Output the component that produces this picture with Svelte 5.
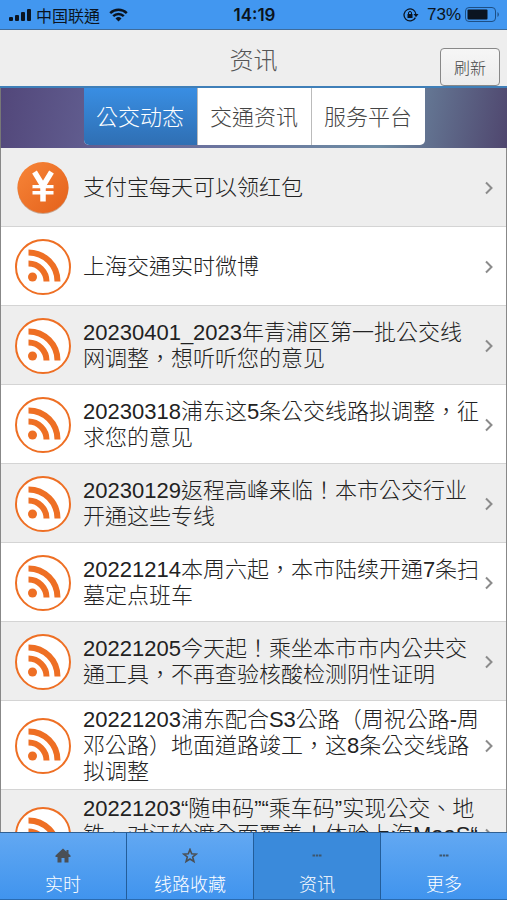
<script>
    const segments = ['公交动态', '交通资讯', '服务平台'];
    const tabs = [
        {label: '实时', icon: 'home'},
        {label: '线路收藏', icon: 'star'},
        {label: '资讯', icon: 'dots'},
        {label: '更多', icon: 'dots'}
    ];
    const news = [
        {icon: 'yuan', text: '支付宝每天可以领红包'},
        {icon: 'rss', text: '上海交通实时微博'},
        {icon: 'rss', text: '20230401_2023年青浦区第一批公交线\n网调整，想听听您的意见'},
        {icon: 'rss', text: '20230318浦东这5条公交线路拟调整，征\n求您的意见'},
        {icon: 'rss', text: '20230129返程高峰来临！本市公交行业\n开通这些专线'},
        {icon: 'rss', text: '20221214本周六起，本市陆续开通7条扫\n墓定点班车'},
        {icon: 'rss', text: '20221205今天起！乘坐本市市内公共交\n通工具，不再查验核酸检测阴性证明'},
        {icon: 'rss', text: '20221203浦东配合S3公路（周祝公路-周\n邓公路）地面道路竣工，这8条公交线路\n拟调整'},
        {icon: 'rss', text: '20221203“随申码”“乘车码”实现公交、地\n铁、对江轮渡全面覆盖！体验上海MaaS“\n绿色出行”'}
    ];
    let segment = $state(0);
    let tab = $state(2);
</script>

<div class="app">
    <div class="status">
        <div class="side">
            <svg width="22" height="14" viewBox="0 0 22 14">
                <rect x="0" y="9" width="4" height="4" rx="1"/>
                <rect x="6" y="7" width="4" height="6" rx="1"/>
                <rect x="12" y="4" width="4" height="9" rx="1"/>
                <rect x="18" y="1" width="4" height="12" rx="1"/>
            </svg>
            <span class="carrier">中国联通</span>
            <svg class="wifi" width="19" height="14" viewBox="0 0 19 14">
                <path d="M1.2 5.2a12 12 0 0 1 16.6 0M4.2 8.2a7.6 7.6 0 0 1 10.6 0" fill="none" stroke="#0b1420" stroke-width="2.5"/>
                <path d="M9.5 13.5 6.5 10.5a4.3 4.3 0 0 1 6 0z"/>
            </svg>
        </div>
        <span class="time">14:19</span>
        <div class="side right">
            <svg width="16" height="14" viewBox="0 0 16 14">
                <path d="M12.4 9.6A6 6 0 1 1 13 6.500" fill="none" stroke="#0b1420" stroke-width="1.3"/>
                <path d="M10.5 6h5L13 9.3z"/>
                <rect x="4.500" y="6" width="5" height="4"/>
                <path d="M5.500 6V5a1.500 1.500 0 0 1 3 0v1" fill="none" stroke="#0b1420"/>
            </svg>
            <span class="percent">73%</span>
            <svg width="35" height="16" viewBox="0 0 35 16">
                <rect x="0.5" y="0.5" width="30" height="14" rx="3.5" fill="none" stroke="#1d4f85"/>
                <rect x="2.5" y="2.5" width="20" height="10" rx="1"/>
                <path d="M32.5 5a3 3 0 0 1 0 5z" fill="#1d4f85"/>
            </svg>
        </div>
    </div>

    <header>
        <h1>资讯</h1>
        <button class="refresh">刷新</button>
    </header>

    <div class="banner">
        <div class="segments">
            {#each segments as name, i}
                <button class:active={segment == i} onclick={() => segment = i}>{name}</button>
            {/each}
        </div>
    </div>

    <ul>
        {#each news as item}
            <li>
                <a href="#news">
                    {#if item.icon == 'yuan'}
                        <svg class="icon" viewBox="0 0 56 56">
                            <defs>
                                <linearGradient id="orange" x1="0" y1="0" x2="1" y2="1">
                                    <stop offset="0" stop-color="#f78538"/>
                                    <stop offset="1" stop-color="#e4611b"/>
                                </linearGradient>
                            </defs>
                            <circle cx="28" cy="28.5" r="25.5" fill="#c9a58e"/>
                            <circle cx="28" cy="27.5" r="25.5" fill="url(#orange)"/>
                            <path d="M19.5 12l8.5 14 8.500-14M28 24v17.500" fill="none" stroke="#fff" stroke-width="5.5"/>
                            <path d="M17.500 25h21v3.500h-21zM17.500 31h21v3.500h-21z" fill="#fff"/>
                            <path d="M17.500 28.500h21v2.500h-21z" fill="#ee7029"/>
                            <path d="M25.250 28h5.500v4h-5.500z" fill="#fff"/>
                        </svg>
                    {:else}
                        <svg class="icon" viewBox="0 0 56 56">
                            <circle cx="28" cy="28" r="27" fill="#fff" stroke="#ee6f24" stroke-width="2"/>
                            <circle cx="17.5" cy="38" r="4.5" fill="#ee6f24"/>
                            <path d="M13.5 24.5a18 18 0 0 1 18 18M13.5 13.5a29 29 0 0 1 29 29" fill="none" stroke="#ee6f24" stroke-width="6"/>
                        </svg>
                    {/if}
                    <span class="text">{item.text}</span>
                    <svg class="arrow" viewBox="0 0 10 14">
                        <path d="M2 1.5 7.5 7 2 12.5" fill="none" stroke="#8b8b8b" stroke-width="2"/>
                    </svg>
                </a>
            </li>
        {/each}
    </ul>

    <nav>
        {#each tabs as item, i}
            <button class:active={tab == i} onclick={() => tab = i}>
                <svg width="16" height="16" viewBox="0 0 16 16">
                    {#if item.icon == 'home'}
                        <path d="M8 0.5 0.5 7.500v1.500h2v5.500h4v-4.500h3v4.500h4V9h2V7.500L13.500 5.600V2h-2v1.800z" fill="#4a4f55"/>
                    {:else if item.icon == 'star'}
                        <path d="M8 1.500l1.700 4.300 4.500.3-3.500 2.900 1.200 4.500L8 11 4.100 13.500l1.200-4.500-3.500-2.900 4.500-.3z" fill="none" stroke="#4a4f55" stroke-width="1.600"/>
                    {:else}
                        <path d="M3.500 6.500h2.500v2H3.500zM6.800 6.500h2.500v2H6.800zM10 6.500h2.500v2H10z" fill="#3d566f"/>
                    {/if}
                </svg>
                <span>{item.label}</span>
            </button>
        {/each}
    </nav>
</div>

<style>
    :global(body){
        overflow: hidden;
    }
    .app{
        display: flex;
        flex-direction: column;
        height: 100vh;
        background-color: #fff;
        font-family: "Liberation Sans", "Noto Sans CJK TC", sans-serif;
        font-weight: 300;
        color: #222;
    }
    button{
        font: inherit;
        padding: 0;
        margin: 0;
        cursor: pointer;
    }
    .status{
        display: flex;
        align-items: center;
        height: 29px;
        padding: 0 7px 0 9px;
        border-bottom: 1px solid #3e6c9c;
        background-color: #4297f0;
        color: #0b1420;
        fill: #0b1420;
        flex: none;
    }
    .side{
        display: flex;
        align-items: center;
        flex: 1;
        gap: 5px;
    }
    .right{
        justify-content: flex-end;
        gap: 8px;
    }
    .carrier{
        font-size: 16px;
        font-weight: 400;
    }
    .wifi{
        margin-left: 4px;
    }
    .time{
        font-family: Inter, sans-serif;
        font-size: 17px;
        font-weight: 600;
    }
    .percent{
        font-family: "Liberation Sans", sans-serif;
        font-size: 17px;
        font-weight: 400;
        margin-right: -4px;
    }
    header{
        display: grid;
        grid-template-columns: 1fr auto 1fr;
        height: 56px;
        border-bottom: 2px solid #3f7fb8;
        background-color: #eee;
        flex: none;
    }
    h1{
        grid-column: 2;
        align-self: center;
        margin: 0;
        font-size: 24px;
        font-weight: 300;
        color: #555;
    }
    .refresh{
        justify-self: end;
        align-self: end;
        width: 60px;
        height: 38px;
        margin-right: 7px;
        border: 1px solid #888;
        border-radius: 4px;
        background: linear-gradient(#f6f6f6, #ececec);
        font-size: 16px;
        color: #444;
    }
    .banner{
        display: flex;
        justify-content: center;
        height: 60px;
        border-left: 1px solid #777;
        background: linear-gradient(100deg, #52477a, #6a6a9c 30%, #6d8ba3 75%, #4f466e);
        flex: none;
    }
    .segments{
        display: flex;
        height: 57px;
        width: 341px;
        border-radius: 0 0 5px 5px;
        overflow: hidden;
        background-color: #fff;
    }
    .segments button{
        flex: 1;
        padding-bottom: 4px;
        border: none;
        background: none;
        font-size: 22px;
        color: #444;
    }
    .segments button + button{
        border-left: 1px solid #bbb;
    }
    .segments .active{
        background: linear-gradient(#398ee3, #2f6fb3);
        color: #fff;
    }
    ul{
        flex: 1;
        min-height: 0;
        overflow: hidden;
        margin: 0;
        padding: 0;
        list-style: none;
        border-left: 1px solid #888;
        border-right: 1px solid #888;
    }
    li{
        border-bottom: 1px solid #d4d4d4;
    }
    li:nth-child(odd){
        background-color: #eee;
    }
    a{
        display: flex;
        align-items: center;
        min-height: 78px;
        box-sizing: border-box;
        padding: 6px 12px 4px 14px;
        color: #222;
        text-decoration: none;
    }
    .icon{
        width: 56px;
        height: 56px;
        margin-right: 12px;
        flex: none;
    }
    .text{
        flex: 1;
        font-size: 22px;
        line-height: 26px;
        white-space: pre-line;
    }
    .arrow{
        width: 10px;
        height: 14px;
        flex: none;
    }
    nav{
        display: flex;
        height: 68px;
        flex: none;
    }
    nav button{
        display: flex;
        flex-direction: column;
        align-items: center;
        justify-content: flex-end;
        gap: 9px;
        flex: 1;
        padding-bottom: 2px;
        border: none;
        border-top: 1px solid #2f5f92;
        border-bottom: 1px solid #2a6bb0;
        background: linear-gradient(#62a8f2, #4094ee);
        color: #fff;
        font-size: 18px;
        line-height: 24px;
    }
    nav button + button{
        border-left: 1px solid #235d99;
    }
    nav .active{
        background: #3a8adb;
    }
</style>
